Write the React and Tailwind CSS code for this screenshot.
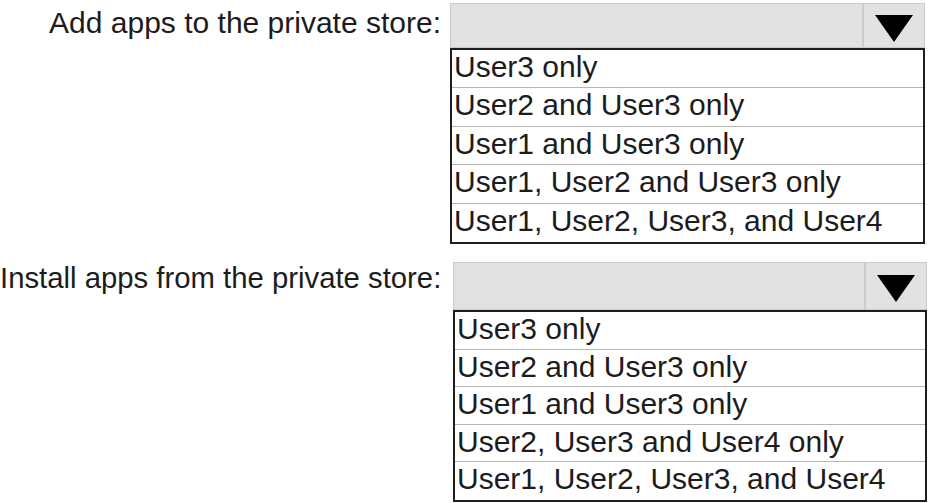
import React from "react";

const font = { fontFamily: '"Liberation Sans", Arial, sans-serif' };

function Triangle() {
  return (
    <svg width="38" height="27" viewBox="0 0 38 27" className="block">
      <polygon points="0,0 38,0 19,27" fill="#000" />
    </svg>
  );
}

function Dropdown({ options, second }) {
  return (
    <div className={second ? "w-[474px] ml-[3px]" : "w-[475px]"}>
      <div className={"flex border border-[#c9c9c9] bg-[#e2e2e2] " + (second ? "h-[48px]" : "h-[45px]")}>
        <div className="flex-1" />
        <div className="w-[62px] border-l-2 border-[#cbcbcb] flex items-center justify-center pt-[6px]">
          <Triangle />
        </div>
      </div>
      <div className="border-2 border-[#1e1e1e] bg-white">
        {options.map((o, i) => (
          <div
            key={i}
            className={
              (second ? "h-[37.6px] " : "h-[38.4px] ") +
              "pl-[2px] text-[30px] leading-[34px] text-[#1c1c1c] whitespace-nowrap " +
              (i < options.length - 1 ? "border-b border-[#b5b5b5]" : "")
            }
          >
            {o}
          </div>
        ))}
      </div>
    </div>
  );
}

export default function App() {
  const a = [
    "User3 only",
    "User2 and User3 only",
    "User1 and User3 only",
    "User1, User2 and User3 only",
    "User1, User2, User3, and User4",
  ];
  const b = [
    "User3 only",
    "User2 and User3 only",
    "User1 and User3 only",
    "User2, User3 and User4 only",
    "User1, User2, User3, and User4",
  ];
  return (
    <div className="w-[930px] h-[503px] bg-white overflow-hidden" style={font}>
      <div className="flex pt-[3px]">
        <div className="w-[450px] pr-[9px] text-right text-[30px] leading-[29px] text-[#1c1c1c] pt-[5px] whitespace-nowrap">
          Add apps to the private store:
        </div>
        <Dropdown options={a} />
      </div>
      <div className="flex mt-[18px]">
        <div className="w-[450px] pr-[9px] text-right text-[29.3px] leading-[29px] text-[#1c1c1c] pt-[1px] whitespace-nowrap">
          Install apps from the private store:
        </div>
        <Dropdown options={b} second />
      </div>
    </div>
  );
}
